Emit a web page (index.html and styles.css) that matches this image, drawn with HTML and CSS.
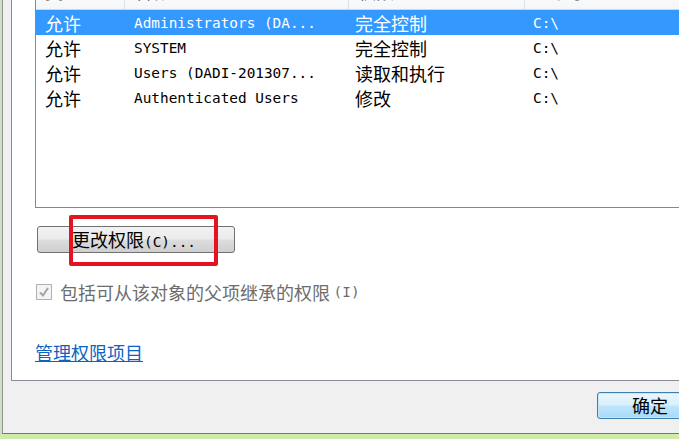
FILE: index.html
```html
<!DOCTYPE html>
<html>
<head>
    <meta charset="UTF-8">
    <title>高级安全设置 - 权限</title>
    <link rel="stylesheet" href="styles.css">
</head>
<body>
    <div class="window">
        <div class="panel">
            <!-- 权限条目列表 -->
            <div class="listbox">
                <div class="list-head">
                    <span class="cell cn">类型</span>
                    <span class="cell cn">名称</span>
                    <span class="cell cn">权限</span>
                    <span class="cell cn">继承于</span>
                </div>
                <div class="row selected">
                    <span class="cell cn">允许</span>
                    <span class="cell mono">Administrators (DA...</span>
                    <span class="cell cn">完全控制</span>
                    <span class="cell mono">C:\</span>
                </div>
                <div class="row">
                    <span class="cell cn">允许</span>
                    <span class="cell mono">SYSTEM</span>
                    <span class="cell cn">完全控制</span>
                    <span class="cell mono">C:\</span>
                </div>
                <div class="row">
                    <span class="cell cn">允许</span>
                    <span class="cell mono">Users (DADI-201307...</span>
                    <span class="cell cn">读取和执行</span>
                    <span class="cell mono">C:\</span>
                </div>
                <div class="row">
                    <span class="cell cn">允许</span>
                    <span class="cell mono">Authenticated Users</span>
                    <span class="cell cn">修改</span>
                    <span class="cell mono">C:\</span>
                </div>
            </div>

            <div class="edit-row">
                <button class="btn"><span class="cn">更改权限</span><span class="mono">(C)...</span></button>
                <span class="mark"></span>
            </div>

            <label class="check">
                <span class="box">
                    <svg width="12" height="12" viewBox="0 0 12 12"><polyline points="2,6.5 5,9.5 10,2" fill="none" stroke="#a3a3a3" stroke-width="2"/></svg>
                </span>
                <span class="cn">包括可从该对象的父项继承的权限</span>&nbsp;<span class="mono">(I)</span>
            </label>

            <a href="#" class="link cn">管理权限项目</a>
        </div>

        <div class="footer">
            <button class="ok cn">确定</button>
        </div>
    </div>
</body>
</html>
```

FILE: styles.css
```css
html, body {
    margin: 0;
    height: 100%;
    overflow: hidden;
}

body {
    background: linear-gradient(180deg, #b8dc8e 0%, #cfeaaa 100%);
    font-family: "Noto Sans CJK SC", sans-serif;
    color: #000;
}

.cn {
    font-family: "Noto Sans CJK SC", sans-serif;
    font-size: 18px;
}

.mono {
    font-family: "DejaVu Sans Mono", "Liberation Mono", monospace;
    font-size: 14.4px;
}

/* 对话框外框 */
.window {
    width: 720px;
    margin: -15px 0 0 2px;
    padding-left: 8px;
    background-color: #f0f0f0;
    border-left: 1px solid #8d998a;
    border-bottom: 1px solid #707a6e;
    box-shadow: -2px 0 0 #d2dcc8;
}

.panel {
    background-color: #fff;
    border-left: 1px solid #898c95;
    border-bottom: 1px solid #898c95;
    padding-bottom: 15px;
}

/* 列表 */
.listbox {
    margin-left: 23px;
    height: 223px;
    box-sizing: border-box;
    border: 1px solid #828790;
    background-color: #fff;
}

.list-head,
.row {
    display: grid;
    grid-template-columns: 89px 224px 176px 1fr;
}

.list-head {
    height: 23px;
    line-height: 10px;
    background: linear-gradient(180deg, #ffffff, #f5f6f7);
    border-bottom: 1px solid #d5d5d5;
    color: #444;
}

.list-head .cell {
    border-right: 1px solid #dcdfe3;
}

.row {
    height: 25px;
    line-height: 27px;
}

.cell {
    padding-left: 9px;
    white-space: nowrap;
    overflow: hidden;
}

.row .cell:nth-child(3) {
    padding-left: 6px;
}

.row .cell:nth-child(4) {
    padding-left: 8px;
}

.row.selected {
    background-color: #3399ff;
    color: #fff;
}

/* 更改权限按钮 */
.edit-row {
    position: relative;
    margin: 18px 0 0 25px;
    height: 27px;
}

.btn {
    width: 198px;
    height: 27px;
    padding: 0 4px 0 0;
    border: 1px solid #707070;
    border-radius: 3px;
    background: linear-gradient(180deg, #f2f2f2 0%, #ebebeb 48%, #dddddd 52%, #cfcfcf 100%);
    color: #000;
    line-height: 25px;
}

.mark {
    position: absolute;
    left: 32px;
    top: -11px;
    width: 149px;
    height: 51px;
    box-sizing: border-box;
    border: 4px solid #e3141f;
    border-radius: 2px;
}

/* 继承复选框 */
.check {
    display: flex;
    align-items: center;
    margin: 30px 0 0 24px;
    height: 18px;
    line-height: 18px;
    color: #6d6d6d;
}

.box {
    width: 16px;
    height: 16px;
    box-sizing: border-box;
    border: 1px solid #b1b1b1;
    background-color: #f4f4f4;
    display: flex;
    justify-content: center;
    align-items: center;
    margin-right: 8px;
}

.link {
    display: inline-block;
    margin: 42px 0 0 23px;
    line-height: 18px;
    color: #0b63c4;
    text-decoration: underline;
}

/* 底部按钮 */
.footer {
    display: flex;
    justify-content: flex-end;
    padding: 11px 28px 14px 0;
}

.ok {
    width: 106px;
    height: 27px;
    padding: 0;
    border: 1px solid #3c7fb1;
    border-radius: 3px;
    background: linear-gradient(180deg, #eaf6fd 0%, #d9f0fc 48%, #bee6fd 52%, #a7d9f5 100%);
    box-shadow: inset 0 0 0 1px #c6e6f8;
    color: #000;
    line-height: 25px;
}
```
